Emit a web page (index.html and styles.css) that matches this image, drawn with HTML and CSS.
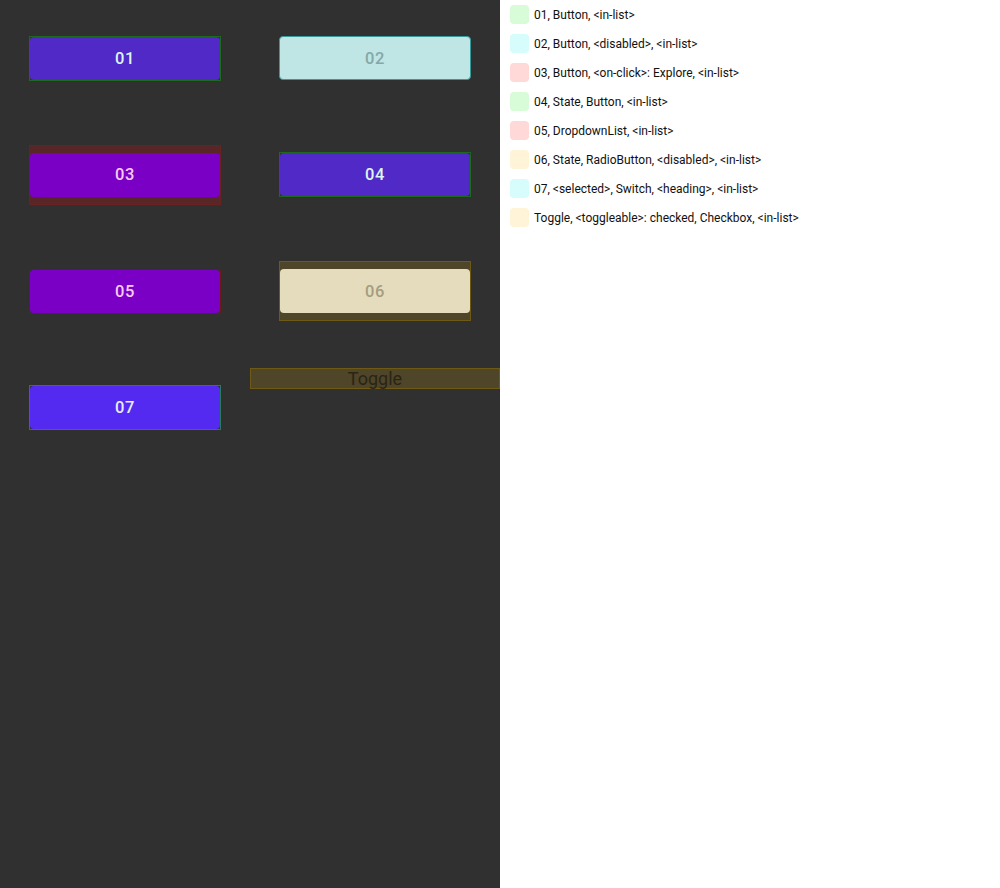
FILE: index.html
```html
<!DOCTYPE html>
<html>
<head>
<meta charset="utf-8">
<link rel="stylesheet" href="styles.css">
</head>
<body>
<div class="screen">
  <div class="canvas">
    <div class="cell"><div class="ring ring-green"><div class="btn btn-indigo txt-cyan">01</div></div></div>
    <div class="cell"><div class="btn btn-disabled">02</div></div>
    <div class="cell"><div class="wrap wrap-red"><div class="btn btn-purple txt-pink">03</div></div></div>
    <div class="cell"><div class="ring ring-green"><div class="btn btn-indigo txt-cyan">04</div></div></div>
    <div class="cell"><div class="ring ring-red"><div class="btn btn-purple txt-pink">05</div></div></div>
    <div class="cell"><div class="wrap wrap-yellow"><div class="btn btn-cream">06</div></div></div>
    <div class="cell"><div class="ring ring-teal"><div class="btn btn-blue txt-white">07</div></div></div>
    <div class="cell cell-top"><div class="toggle">Toggle</div></div>
  </div>
  <div class="legend">
    <div class="row"><span class="sw sw-green"></span><span>01, Button, &lt;in-list&gt;</span></div>
    <div class="row"><span class="sw sw-cyan"></span><span>02, Button, &lt;disabled&gt;, &lt;in-list&gt;</span></div>
    <div class="row"><span class="sw sw-red"></span><span>03, Button, &lt;on-click&gt;: Explore, &lt;in-list&gt;</span></div>
    <div class="row"><span class="sw sw-green"></span><span>04, State, Button, &lt;in-list&gt;</span></div>
    <div class="row"><span class="sw sw-red"></span><span>05, DropdownList, &lt;in-list&gt;</span></div>
    <div class="row"><span class="sw sw-yellow"></span><span>06, State, RadioButton, &lt;disabled&gt;, &lt;in-list&gt;</span></div>
    <div class="row"><span class="sw sw-cyan"></span><span>07, &lt;selected&gt;, Switch, &lt;heading&gt;, &lt;in-list&gt;</span></div>
    <div class="row"><span class="sw sw-yellow"></span><span>Toggle, &lt;toggleable&gt;: checked, Checkbox, &lt;in-list&gt;</span></div>
  </div>
</div>
</body>
</html>
```
FILE: styles.css
```css
html, body {
  margin: 0;
  padding: 0;
  background: #ffffff;
  font-family: Roboto, "Liberation Sans", sans-serif;
}
.screen {
  display: flex;
  width: 1000px;
  height: 888px;
}
.canvas {
  width: 500px;
  height: 888px;
  background: #303030;
  display: grid;
  grid-template-columns: 250px 250px;
  grid-template-rows: repeat(4, 116.5px);
  align-content: start;
}
.cell {
  display: flex;
  align-items: center;
  justify-content: center;
}
.cell-top {
  align-items: flex-start;
  padding-top: 18.5px;
}
.btn {
  width: 192px;
  height: 44px;
  box-sizing: border-box;
  border-radius: 4px;
  display: flex;
  align-items: center;
  justify-content: center;
  font-size: 16.5px;
  font-weight: 500;
  letter-spacing: 0.6px;
}
.ring {
  width: 192px;
  height: 45px;
  box-sizing: border-box;
  border: 1px solid;
  display: flex;
}
.ring .btn {
  width: 190px;
  height: 43px;
}
.ring-green { border-color: #1d6a1d; }
.ring-red { border-color: #6a1a1a; }
.ring-teal { border-color: #2a7a5e; }
.wrap {
  width: 192px;
  box-sizing: border-box;
  border: 1px solid;
  padding: 7px 0;
  display: flex;
}
.wrap .btn { width: 190px; }
.wrap-red { background: #582626; border-color: #6a2121; }
.wrap-yellow { background: #4f4528; border-color: #6e5a14; }
.btn-indigo { background: #5029c6; }
.btn-purple { background: #7b00c6; }
.btn-blue { background: #5429f0; }
.btn-disabled {
  background: #bfe5e5;
  border: 1px solid #3a9a9a;
  color: #85a8a6;
}
.btn-cream {
  background: #e4dcbd;
  color: #a59d80;
}
.txt-cyan { color: #dcf6f4; }
.txt-pink { color: #f6ccf2; }
.txt-white { color: #e8ecff; }
.toggle {
  width: 250px;
  height: 21px;
  box-sizing: border-box;
  background: #4f4528;
  border: 1px solid #6e5a14;
  color: #2a2416;
  font-size: 18px;
  line-height: 19px;
  text-align: center;
}
.legend {
  flex: 1;
  background: #ffffff;
  padding: 5px 0 0 10px;
  display: flex;
  flex-direction: column;
  gap: 10px;
}
.row {
  display: flex;
  align-items: center;
  gap: 5px;
  height: 19px;
  font-size: 12px;
  color: #111111;
}
.sw {
  width: 19px;
  height: 19px;
  border-radius: 4px;
  flex: none;
}
.sw-green { background: #d8fbd8; }
.sw-cyan { background: #d6fcfc; }
.sw-red { background: #ffd8d8; }
.sw-yellow { background: #fff3d8; }
```
